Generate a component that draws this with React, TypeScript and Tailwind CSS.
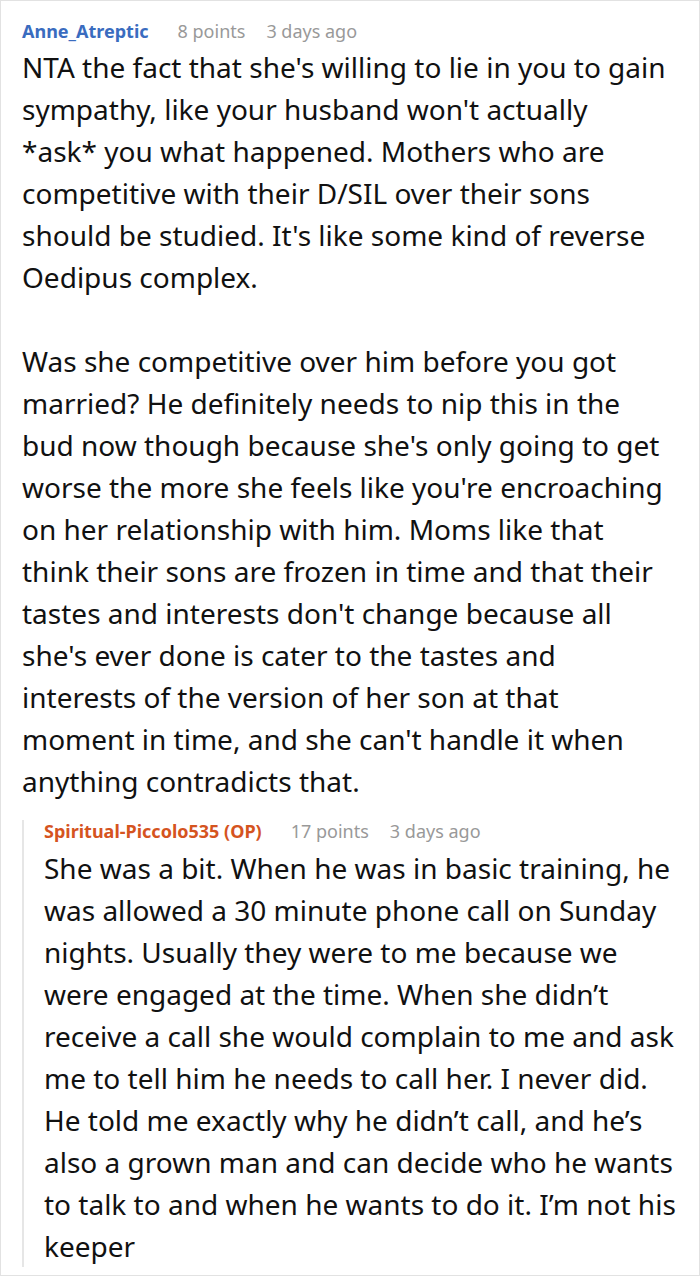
const parentLines = [
  "NTA the fact that she's willing to lie in you to gain",
  "sympathy, like your husband won't actually",
  "*ask* you what happened. Mothers who are",
  "competitive with their D/SIL over their sons",
  "should be studied. It's like some kind of reverse",
  "Oedipus complex.",
]

const parentLines2 = [
  "Was she competitive over him before you got",
  "married? He definitely needs to nip this in the",
  "bud now though because she's only going to get",
  "worse the more she feels like you're encroaching",
  "on her relationship with him. Moms like that",
  "think their sons are frozen in time and that their",
  "tastes and interests don't change because all",
  "she's ever done is cater to the tastes and",
  "interests of the version of her son at that",
  "moment in time, and she can't handle it when",
  "anything contradicts that.",
]

const replyLines = [
  "She was a bit. When he was in basic training, he",
  "was allowed a 30 minute phone call on Sunday",
  "nights. Usually they were to me because we",
  "were engaged at the time. When she didn\u2019t",
  "receive a call she would complain to me and ask",
  "me to tell him he needs to call her. I never did.",
  "He told me exactly why he didn\u2019t call, and he\u2019s",
  "also a grown man and can decide who he wants",
  "to talk to and when he wants to do it. I\u2019m not his",
  "keeper",
]

function Lines({ lines }: { lines: string[] }) {
  return (
    <div>
      {lines.map((l, i) => (
        <div key={i} className="whitespace-nowrap">
          {l}
        </div>
      ))}
    </div>
  )
}

function Meta({ name, color, points }: { name: string; color: string; points: string }) {
  return (
    <div className="flex items-center h-[22px] text-[18px] leading-[22px]">
      <span className={`font-bold ${color}`}>{name}</span>
      <span className="ml-[29px] text-[#999]">{points}</span>
      <span className="ml-[21px] text-[#999]">3 days ago</span>
    </div>
  )
}

export default function App() {
  return (
    <div
      className="w-[700px] h-[1276px] bg-white border border-[#e2e2e2] overflow-hidden"
      style={{ fontFamily: '"Noto Sans", "Open Sans", sans-serif' }}
    >
      <div className="pl-[21px] pt-[19px]">
        <Meta name="Anne_Atreptic" color="text-[#3a6cbf]" points="8 points" />
        <div className="mt-[4px] text-[28px] leading-[42px] text-[#111]">
          <Lines lines={parentLines} />
          <div className="h-[42px]" />
          <Lines lines={parentLines2} />
        </div>

        <div className="mt-[18px] border-l-2 border-[#e6e6e6] pl-[20px]">
          <Meta name="Spiritual-Piccolo535 (OP)" color="text-[#d5541f]" points="17 points" />
          <div className="mt-[5px] text-[28px] leading-[42px] text-[#111]">
            <Lines lines={replyLines} />
          </div>
        </div>
      </div>
    </div>
  )
}
